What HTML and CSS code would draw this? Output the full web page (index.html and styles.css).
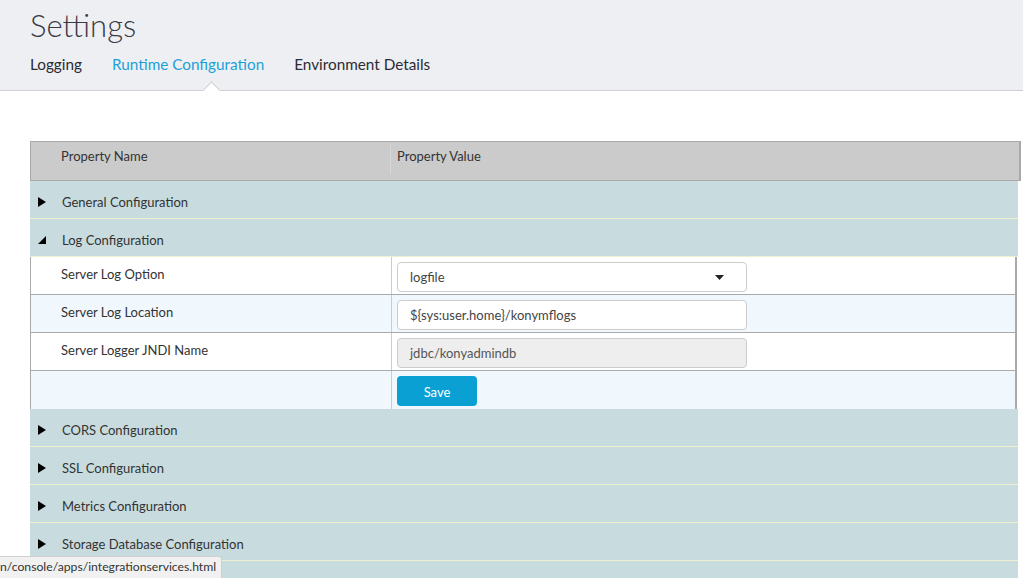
FILE: index.html
```html
<!DOCTYPE html>
<html>
<head>
<meta charset="utf-8">
<link rel="stylesheet" href="styles.css">
</head>
<body>
<header class="page-header">
  <h1 class="title">Settings</h1>
  <nav class="tabs">
    <span class="tab">Logging</span>
    <span class="tab active">Runtime Configuration</span>
    <span class="tab">Environment Details</span>
  </nav>
</header>

<main class="content">
  <div class="grid">
    <div class="head-row">
      <div class="head-cell name">Property Name</div>
      <div class="head-cell value">Property Value</div>
    </div>

    <div class="group">
      <svg class="caret" width="9" height="10" viewBox="0 0 9 10"><path d="M0 0 L8 5 L0 10 Z"/></svg>
      <span>General Configuration</span>
    </div>
    <div class="group">
      <svg class="caret" width="9" height="10" viewBox="0 0 9 10"><path d="M8 1 L8 9 L0 9 Z"/></svg>
      <span>Log Configuration</span>
    </div>

    <div class="sub">
      <div class="sub-name">Server Log Option</div>
      <div class="sub-value">
        <div class="field select"><span>logfile</span><svg width="9" height="5" viewBox="0 0 9 5"><path d="M0 0 L9 0 L4.5 5 Z"/></svg></div>
      </div>
    </div>
    <div class="sub alt">
      <div class="sub-name">Server Log Location</div>
      <div class="sub-value">
        <div class="field">${sys:user.home}/konymflogs</div>
      </div>
    </div>
    <div class="sub">
      <div class="sub-name">Server Logger JNDI Name</div>
      <div class="sub-value">
        <div class="field disabled">jdbc/konyadmindb</div>
      </div>
    </div>
    <div class="sub alt last">
      <div class="sub-name"></div>
      <div class="sub-value">
        <button class="save">Save</button>
      </div>
    </div>

    <div class="group">
      <svg class="caret" width="9" height="10" viewBox="0 0 9 10"><path d="M0 0 L8 5 L0 10 Z"/></svg>
      <span>CORS Configuration</span>
    </div>
    <div class="group">
      <svg class="caret" width="9" height="10" viewBox="0 0 9 10"><path d="M0 0 L8 5 L0 10 Z"/></svg>
      <span>SSL Configuration</span>
    </div>
    <div class="group">
      <svg class="caret" width="9" height="10" viewBox="0 0 9 10"><path d="M0 0 L8 5 L0 10 Z"/></svg>
      <span>Metrics Configuration</span>
    </div>
    <div class="group">
      <svg class="caret" width="9" height="10" viewBox="0 0 9 10"><path d="M0 0 L8 5 L0 10 Z"/></svg>
      <span>Storage Database Configuration</span>
    </div>
    <div class="group"></div>
  </div>
</main>

<div class="status">n/console/apps/integrationservices.html</div>
</body>
</html>
```

FILE: styles.css
```css
html, body {
  margin: 0;
  padding: 0;
  overflow: hidden;
  height: 100%;
}
body {
  font-family: Lato, "Open Sans", sans-serif;
  color: #333;
  background: #fff;
}
.page-header {
  background: #eeeff3;
  height: 90px;
  border-bottom: 1px solid #cfcfd3;
  padding-left: 30px;
  box-sizing: content-box;
  position: relative;
}
.title {
  margin: 0;
  padding-top: 6px;
  font-size: 31px;
  font-weight: 300;
  color: #3a3a44;
  line-height: 38px;
}
.tabs {
  display: flex;
  gap: 30px;
  margin-top: 11px;
  font-size: 15.3px;
  line-height: 18px;
}
.tab {
  color: #2b2b33;
  position: relative;
}
.tab.active {
  color: #1e9fd8;
}
.tab.active::after {
  content: "";
  position: absolute;
  left: 93px;
  top: 29px;
  width: 12px;
  height: 12px;
  background: #fff;
  border-left: 1px solid #cfcfd3;
  border-top: 1px solid #cfcfd3;
  transform: rotate(45deg);
}
.content {
  padding: 50px 0 0 30px;
}
.grid {
  width: 991px;
  font-size: 13px;
  color: #333;
}
.head-row {
  display: flex;
  height: 38px;
  background: #cbcbcb;
  border: 1px solid #a9a9a9;
  border-right-width: 2px;
  box-sizing: content-box;
  width: 988px;
}
.head-cell {
  display: flex;
  align-items: center;
  box-sizing: border-box;
  color: #333;
}
.head-cell.name {
  width: 360px;
  padding-left: 30px;
  border-right: 1px solid #d8d8d8;
  margin: 3px 0 6px;
  padding-bottom: 8px;
}
.head-cell.value {
  padding-left: 6px;
  padding-bottom: 11px;
}
.group {
  display: flex;
  align-items: center;
  background: #c8dcdf;
  border-bottom: 1px solid #eef0d0;
  padding-left: 8px;
  padding-top: 4px;
  box-sizing: border-box;
  height: 38px;
  width: 988px;
}
.caret {
  fill: #000;
  margin-right: 15px;
  flex: none;
}
.sub {
  display: flex;
  width: 984px;
  height: 37px;
  border-left: 1px solid #a9a9a9;
  border-right: 2px solid #a9a9a9;
  border-bottom: 1px solid #a9a9a9;
  background: #fff;
  box-sizing: content-box;
}
.sub.alt {
  background: #f0f7fd;
}
.sub.last {
  border-bottom: none;
  height: 38px;
}
.sub-name {
  width: 361px;
  border-right: 1px solid #cccccc;
  padding-left: 30px;
  padding-top: 9px;
  box-sizing: border-box;
  color: #333;
}
.sub-value {
  padding: 5px 0 0 5px;
  box-sizing: border-box;
}
.field {
  width: 350px;
  height: 30px;
  box-sizing: border-box;
  border: 1px solid #cccccc;
  border-radius: 4px;
  background: #fff;
  padding: 0 12px;
  display: flex;
  align-items: center;
  color: #444;
}
.field.select {
  justify-content: space-between;
  padding-right: 22px;
}
.field.select svg {
  fill: #222;
}
.field.disabled {
  background: #eeeeee;
  color: #555;
}
.save {
  width: 80px;
  height: 30px;
  border: none;
  border-radius: 4px;
  background: #0aa0d4;
  color: #fff;
  font-family: Lato, "Open Sans", sans-serif;
  font-size: 13px;
  padding: 2px 0 0;
}
.status {
  position: fixed;
  left: 0;
  bottom: 0;
  width: 221px;
  height: 21px;
  background: #f1f1f1;
  border-top: 1px solid #cfcfcf;
  border-right: 1px solid #cfcfcf;
  border-top-right-radius: 3px;
  font-size: 12.2px;
  line-height: 19px;
  color: #333;
  white-space: nowrap;
  overflow: hidden;
}
```
